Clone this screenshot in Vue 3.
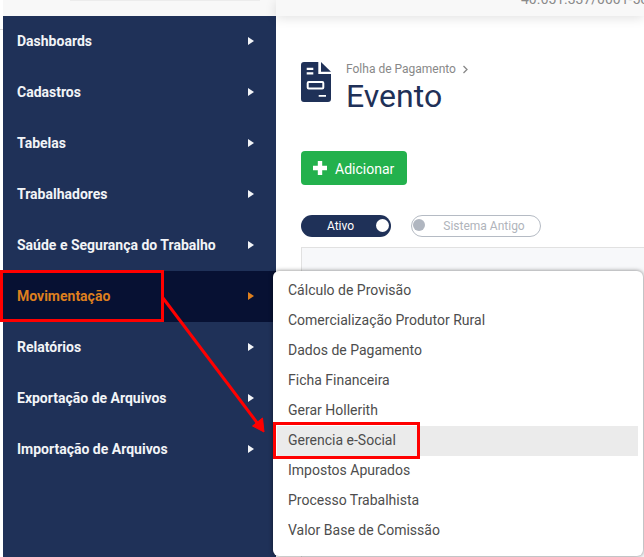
<script setup>
const menu = [
  { label: "Dashboards" },
  { label: "Cadastros" },
  { label: "Tabelas" },
  { label: "Trabalhadores" },
  { label: "Saúde e Segurança do Trabalho" },
  { label: "Movimentação", active: true },
  { label: "Relatórios" },
  { label: "Exportação de Arquivos" },
  { label: "Importação de Arquivos" }
]

const submenu = [
  { label: "Cálculo de Provisão" },
  { label: "Comercialização Produtor Rural" },
  { label: "Dados de Pagamento" },
  { label: "Ficha Financeira" },
  { label: "Gerar Hollerith" },
  { label: "Gerencia e-Social", hover: true },
  { label: "Impostos Apurados" },
  { label: "Processo Trabalhista" },
  { label: "Valor Base de Comissão" }
]
</script>

<template>
  <div class="page">
    <aside class="side">
      <div class="side-top"><div class="search-edge"></div></div>
      <nav class="nav">
        <a
          v-for="item in menu"
          :key="item.label"
          class="nav-item"
          :class="{ active: item.active }"
        >
          <span>{{ item.label }}</span>
          <i class="caret"></i>
        </a>
      </nav>
    </aside>

    <div class="content">
      <header class="topbar">
        <span class="cnpj">40.651.337/0001-50</span>
      </header>

      <main class="main">
        <div class="title-row">
          <svg class="doc-icon" width="30" height="40" viewBox="0 0 30 40">
            <path fill="#1f3158" d="M3 0H17.300V12H30V37a3 3 0 0 1-3 3H3a3 3 0 0 1-3-3V3a3 3 0 0 1 3-3Z" />
            <path fill="#1f3158" d="M20 0 30 9.700H20Z" />
            <path fill="#fff" d="M5.700 5.700h6.600v2.300H5.700zM5.700 10.300h6.600v2.100H5.700zM17.700 33h7.300v1.800h-7.300z" />
            <rect x="6.700" y="20" width="15.600" height="6.400" rx="1" fill="none" stroke="#fff" stroke-width="2" />
          </svg>
          <div class="title-text">
            <div class="crumb">
              Folha de Pagamento
              <svg width="7" height="9" viewBox="0 0 7 9"><path d="M1.500 1 5 4.500 1.500 8" fill="none" stroke="#888" stroke-width="1.300" /></svg>
            </div>
            <h1>Evento</h1>
          </div>
        </div>

        <button class="add-btn">
          <svg width="14" height="14" viewBox="0 0 14 14"><path fill="#fff" d="M4.800 0h4.400v4.800H14v4.400H9.200V14H4.800V9.200H0V4.800h4.800z" /></svg>
          <span>Adicionar</span>
        </button>

        <div class="toggles">
          <div class="toggle on">
            <span>Ativo</span>
            <i class="knob"></i>
          </div>
          <div class="toggle off">
            <i class="knob"></i>
            <span>Sistema Antigo</span>
          </div>
        </div>

        <div class="panel"></div>
      </main>
    </div>

    <div class="submenu">
      <a
        v-for="item in submenu"
        :key="item.label"
        class="sub-item"
        :class="{ hover: item.hover }"
      >{{ item.label }}</a>
    </div>

    <div class="mark mark-a"></div>
    <div class="mark mark-b"></div>
    <svg class="arrow" width="644" height="557" viewBox="0 0 644 557">
      <path d="M163 298 258 424" stroke="#f00" stroke-width="3" fill="none" />
      <path d="M264 432 252.500 426 262.500 418 Z" fill="#f00" stroke="#f00" stroke-width="1" />
    </svg>
  </div>
</template>

<style>
html,
body {
  margin: 0;
  background: #fff;
  overflow: hidden;
}
</style>

<style scoped>
.page {
  position: relative;
  display: flex;
  width: 644px;
  height: 557px;
  overflow: hidden;
  font-family: Roboto, "Liberation Sans", sans-serif;
  background: #fff;
}

/* bout de bordure visible a gauche du menu */
.page::before {
  content: "";
  position: absolute;
  left: 0;
  top: 29px;
  width: 3px;
  height: 1px;
  background: #d9d9d9;
}

.side {
  flex: none;
  width: 273px;
  margin-left: 3px;
  display: flex;
  flex-direction: column;
}

.side-top {
  height: 16px;
  background: #f8f8f8;
}

.search-edge {
  width: 190px;
  height: 1px;
  margin-left: 67px;
  background: #ececec;
}

.nav {
  flex: 1;
  background: #1f3158;
}

.nav-item {
  box-sizing: border-box;
  display: flex;
  align-items: center;
  justify-content: space-between;
  height: 51px;
  padding: 0 22px 2px 14px;
  font-size: 14px;
  font-weight: 700;
  color: #f2f4f7;
}

.nav-item.active {
  background: #071133;
  color: #dd7f1e;
}

.caret {
  width: 0;
  height: 0;
  border-top: 4px solid transparent;
  border-bottom: 4px solid transparent;
  border-left: 6px solid currentColor;
}

.content {
  flex: 1;
  min-width: 0;
  display: flex;
  flex-direction: column;
}

.topbar {
  flex: none;
  height: 16px;
  background: #f8f8f8;
  box-shadow: 0 2px 12px rgba(0, 0, 0, 0.12);
  overflow: hidden;
  padding-left: 245px;
}

.cnpj {
  display: block;
  margin-top: -9px;
  font-size: 14px;
  line-height: 16px;
  color: #8a8a8a;
  white-space: nowrap;
}

.main {
  flex: 1;
  padding: 46px 0 0 25px;
}

.title-row {
  display: flex;
  gap: 15px;
  height: 50px;
}

.crumb {
  display: flex;
  align-items: center;
  gap: 6px;
  font-size: 12px;
  line-height: 14px;
  color: #888;
}

h1 {
  margin: 2px 0 0;
  font-size: 32px;
  font-weight: 400;
  line-height: 36px;
  color: #1f3158;
}

.add-btn {
  display: flex;
  align-items: center;
  gap: 8px;
  width: 106px;
  height: 34px;
  margin-top: 39px;
  padding: 0 0 0 12px;
  border: 0;
  border-radius: 4px;
  background: #23b14d;
  color: #fff;
  font-family: inherit;
  font-size: 14px;
}

.add-btn span {
  padding-top: 1px;
}

.toggles {
  display: flex;
  gap: 20px;
  margin-top: 30px;
}

.toggle {
  position: relative;
  box-sizing: border-box;
  height: 22px;
  border-radius: 11px;
  font-size: 12px;
  line-height: 22px;
  text-align: center;
}

.toggle.on {
  width: 90px;
  padding-right: 11px;
  background: #1f3158;
  color: #fff;
}

.toggle.off {
  width: 130px;
  padding-left: 16px;
  line-height: 20px;
  border: 1px solid #b5bbc4;
  color: #b0b4bb;
}

.knob {
  position: absolute;
  border-radius: 50%;
}

.on .knob {
  right: 2px;
  top: 4px;
  width: 13px;
  height: 13px;
  background: #fff;
}

.off .knob {
  left: 1px;
  top: 3px;
  width: 12px;
  height: 12px;
  background: #b0b6c0;
}

.panel {
  height: 400px;
  margin-top: 10px;
  background: #f7f8fa;
  border: 1px solid #e1e1e1;
  border-right: 0;
}

.submenu {
  position: absolute;
  left: 273px;
  top: 271px;
  box-sizing: border-box;
  width: 370px;
  height: 285px;
  padding: 5px 5px 0 4px;
  background: #fff;
  border-radius: 6px;
  box-shadow: 0 0 4px rgba(0, 0, 0, 0.5);
}

.sub-item {
  display: block;
  height: 30px;
  padding-left: 11px;
  font-size: 14px;
  line-height: 29px;
  color: #4d4d4d;
}

.sub-item.hover {
  background: #ebebeb;
}

.mark {
  position: absolute;
  box-sizing: border-box;
  border: 3px solid #f00;
}

.mark-a {
  left: 0;
  top: 270px;
  width: 164px;
  height: 52px;
}

.mark-b {
  left: 273px;
  top: 422px;
  width: 147px;
  height: 37px;
}

.arrow {
  position: absolute;
  left: 0;
  top: 0;
  pointer-events: none;
}
</style>
